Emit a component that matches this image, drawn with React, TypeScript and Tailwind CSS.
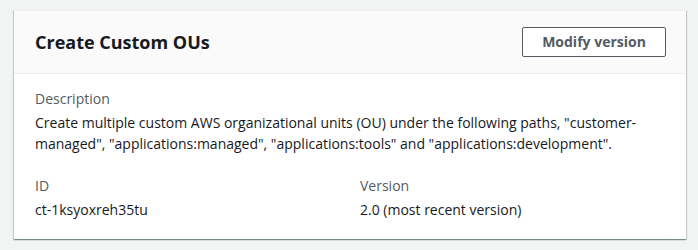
export default function App() {
  return (
    <div className="w-[698px] h-[250px] bg-[#f2f3f3] pt-[10px] px-[14px]" style={{ fontFamily: '"Open Sans", "Noto Sans", Arial, sans-serif' }}>
      <div className="w-[672px] h-[229px] bg-white shadow-[0_1px_1px_0_rgba(0,28,36,0.3),1px_1px_1px_0_rgba(0,28,36,0.15),-1px_1px_1px_0_rgba(0,28,36,0.15)] border-t border-[#eaeded]">
        <div className="h-[63px] bg-[#fafafa] border-b border-[#eaeded] flex items-center justify-between pl-[21px] pr-[20px]">
          <h2 className="text-[18px] font-bold text-[#16191f] leading-[22px]">Create Custom OUs</h2>
          <button className="h-[30px] w-[144px] border border-[#545b64] rounded-[2px] bg-white text-[14px] font-bold text-[#545b64] leading-[20px]">Modify version</button>
        </div>
        <div className="px-[21px] pt-[14px] text-[14px] leading-[21px]">
          <div className="text-[#545b64]">Description</div>
          <div className="text-[#16191f] mt-[3px]">
            Create multiple custom AWS organizational units (OU) under the following paths, "customer-managed", "applications:managed", "applications:tools" and "applications:development".
          </div>
          <div className="grid grid-cols-2 mt-[21px]">
            <div>
              <div className="text-[#545b64]">ID</div>
              <div className="text-[#16191f] mt-[3px]">ct-1ksyoxreh35tu</div>
            </div>
            <div className="pl-[10px]">
              <div className="text-[#545b64]">Version</div>
              <div className="text-[#16191f] mt-[3px]">2.0 (most recent version)</div>
            </div>
          </div>
        </div>
      </div>
    </div>
  );
}
